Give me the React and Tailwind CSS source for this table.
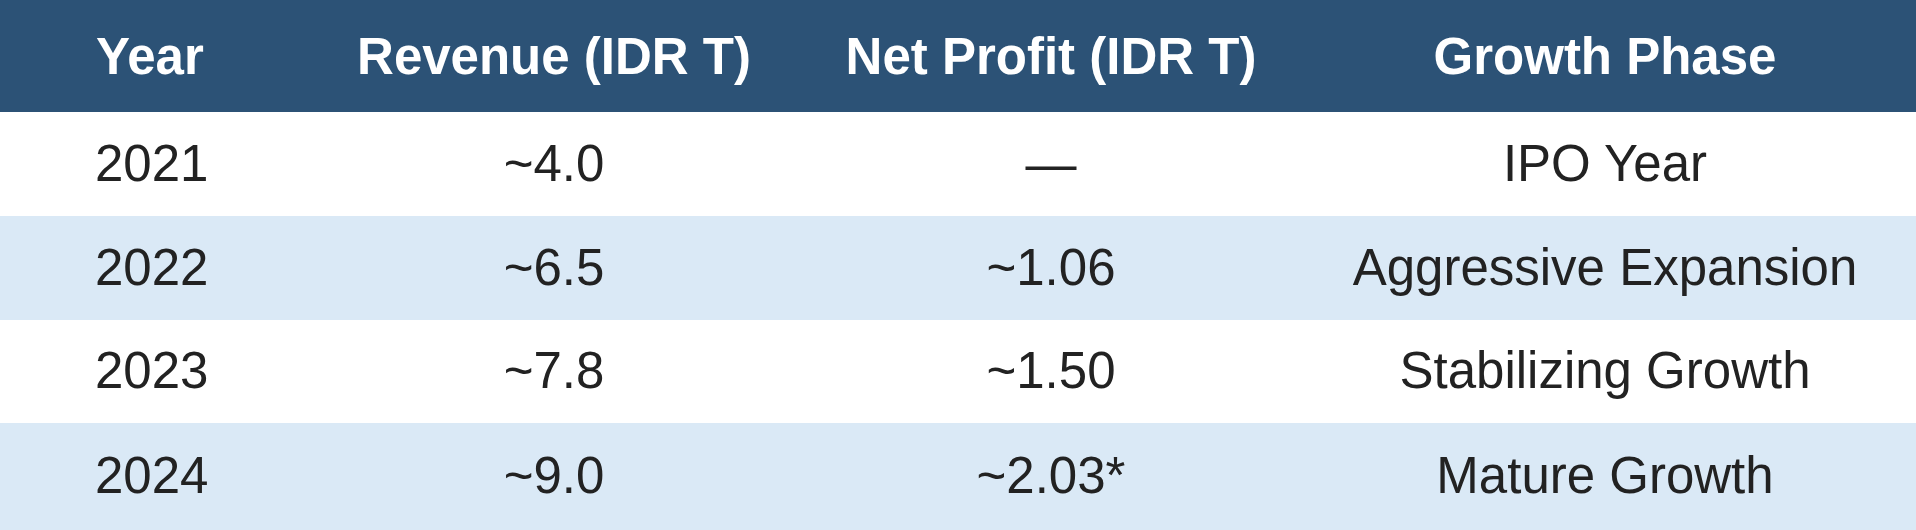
import React from "react";

const rows = [
  { year: "2021", rev: "~4.0", np: "—", phase: "IPO Year", shade: false, h: "h-[104px]" },
  { year: "2022", rev: "~6.5", np: "~1.06", phase: "Aggressive Expansion", shade: true, h: "h-[104px]" },
  { year: "2023", rev: "~7.8", np: "~1.50", phase: "Stabilizing Growth", shade: false, h: "h-[103px]" },
  { year: "2024", rev: "~9.0", np: "~2.03*", phase: "Mature Growth", shade: true, h: "h-[107px]" },
];

export default function App() {
  return (
    <div
      className="w-[1916px] h-[530px] bg-white overflow-hidden"
      style={{ fontFamily: '"Liberation Sans", Arial, sans-serif' }}
    >
      <div className="grid grid-cols-[300px_508px_486px_1fr] h-[112px] bg-[#2c5276] text-white font-bold text-[51px] items-center leading-none">
        <div className="pl-[96px]">Year</div>
        <div className="text-center">Revenue (IDR T)</div>
        <div className="text-center">Net Profit (IDR T)</div>
        <div className="text-center">Growth Phase</div>
      </div>
      {rows.map((r) => (
        <div
          key={r.year}
          className={`grid grid-cols-[300px_508px_486px_1fr] ${r.h} items-center text-[51px] leading-none text-[#222222] pb-[2px] ${
            r.shade ? "bg-[#dae9f6]" : "bg-white"
          }`}
        >
          <div className="pl-[95px]">{r.year}</div>
          <div className="text-center">{r.rev}</div>
          <div className="text-center">{r.np}</div>
          <div className="text-center">{r.phase}</div>
        </div>
      ))}
    </div>
  );
}
